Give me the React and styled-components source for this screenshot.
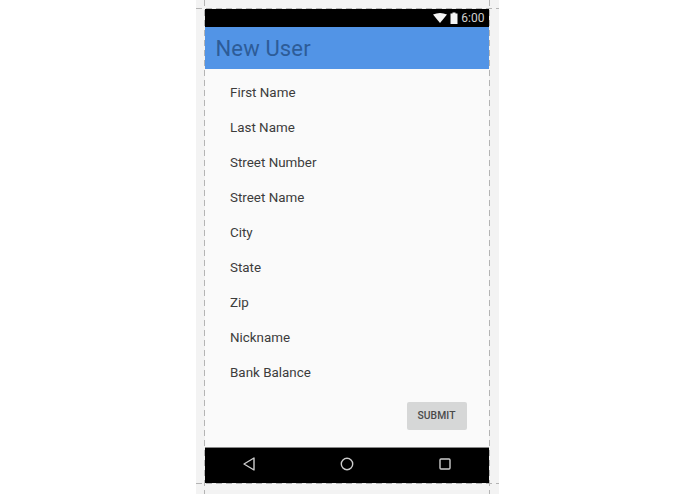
import React from 'react';
import styled, { createGlobalStyle } from 'styled-components';

const Global = createGlobalStyle`
  html, body { margin: 0; padding: 0; background: #fff; }
  body { width: 695px; height: 494px; overflow: hidden; font-family: Roboto, "Liberation Sans", sans-serif; }
`;
const Page = styled.div`
  width: 695px; height: 494px; display: flex; justify-content: center; background: #fff;
`;
const Canvas = styled.div`
  position: relative; width: 303px; height: 494px; margin-left: -1px; background: #f3f3f3;
  padding: 9px 9px 11px 9px; box-sizing: border-box;
`;
const Device = styled.div`
  width: 284px; height: 474px; display: flex; flex-direction: column; background: #fafafa;
`;
const DashV = styled.div`
  position: absolute; top: 0; bottom: 0; left: ${p => p.$x}px; width: 1px;
  background: repeating-linear-gradient(to bottom, #b4b4b4 0 6px, transparent 6px 10px);
`;
const DashH = styled.div`
  position: absolute; left: 0; right: 0; top: ${p => p.$y}px; height: 1px;
  background: repeating-linear-gradient(to right, #b4b4b4 0 6px, transparent 6px 10px);
`;
const StatusBar = styled.div`
  height: 18px; background: #000; display: flex; align-items: center; justify-content: flex-end;
  gap: 3px; padding-right: 4px; color: #d0d0d0; font-size: 12px;
`;
const AppBar = styled.div`
  height: 42px; background: #5294e6; display: flex; align-items: center; padding-left: 11px;
  color: #2d5c98; font-size: 22px; letter-spacing: 0.15px;
`;
const Content = styled.div`
  flex: 1; display: flex; flex-direction: column; padding: 6px 22px 0 25px; background: #fafafa;
`;
const Field = styled.div`
  height: ${p => p.$h}px; display: flex; align-items: center; font-size: 13.4px; color: #3c3c3c;
  padding-left: 0.5px;
`;
const Actions = styled.div`
  display: flex; justify-content: flex-end; margin-top: 12px;
`;
const Submit = styled.button`
  width: 60px; height: 28px; border: 0; border-radius: 2px; background: #d6d7d7; color: #4a4a4a;
  font: 500 10.3px Roboto, "Liberation Sans", sans-serif; padding: 0 0 2px; letter-spacing: 0.1px;
`;
const NavBar = styled.div`
  height: 36px; background: #000; border-top: 1px solid #888; box-sizing: border-box; display: flex;
  align-items: center; justify-content: space-between; padding: 0 38px 3px 38px;
`;
const Time = styled.span`line-height: 1;`;

const fields = [['First Name', 35], ['Last Name', 35.5], ['Street Number', 34], ['Street Name', 35.5], ['City', 35], ['State', 35], ['Zip', 35], ['Nickname', 35], ['Bank Balance', 35]];

export default function App() {
  return (
    <Page>
      <Global />
      <Canvas>
        <Device>
          <StatusBar>
            <svg width="14" height="10" viewBox="0 0 14 10"><path d="M0 1.5 Q7 -1.5 14 1.5 L7 10 Z" fill="#f4f4f4" /></svg>
            <svg width="8" height="12" viewBox="0 0 8 12"><path d="M2.5 0.5h3v1h2v10.5h-7v-10.5h2z" fill="#f4f4f4" /></svg>
            <Time>6:00</Time>
          </StatusBar>
          <AppBar>New User</AppBar>
          <Content>
            {fields.map(([t, h]) => <Field key={t} $h={h}>{t}</Field>)}
            <Actions><Submit>SUBMIT</Submit></Actions>
          </Content>
          <NavBar>
            <svg width="12" height="14" viewBox="0 0 12 14"><path d="M11 1 L1 7 L11 13 Z" fill="none" stroke="#ccc" strokeWidth="1.4" strokeLinejoin="round" /></svg>
            <svg width="14" height="14" viewBox="0 0 14 14"><circle cx="7" cy="7" r="5.7" fill="none" stroke="#ccc" strokeWidth="1.4" /></svg>
            <svg width="12" height="12" viewBox="0 0 12 12"><rect x="1" y="1" width="10" height="10" rx="1" fill="none" stroke="#ccc" strokeWidth="1.4" /></svg>
          </NavBar>
        </Device>
        <DashV $x={8} />
        <DashV $x={293} />
        <DashH $y={8} />
        <DashH $y={483} />
      </Canvas>
    </Page>
  );
}
